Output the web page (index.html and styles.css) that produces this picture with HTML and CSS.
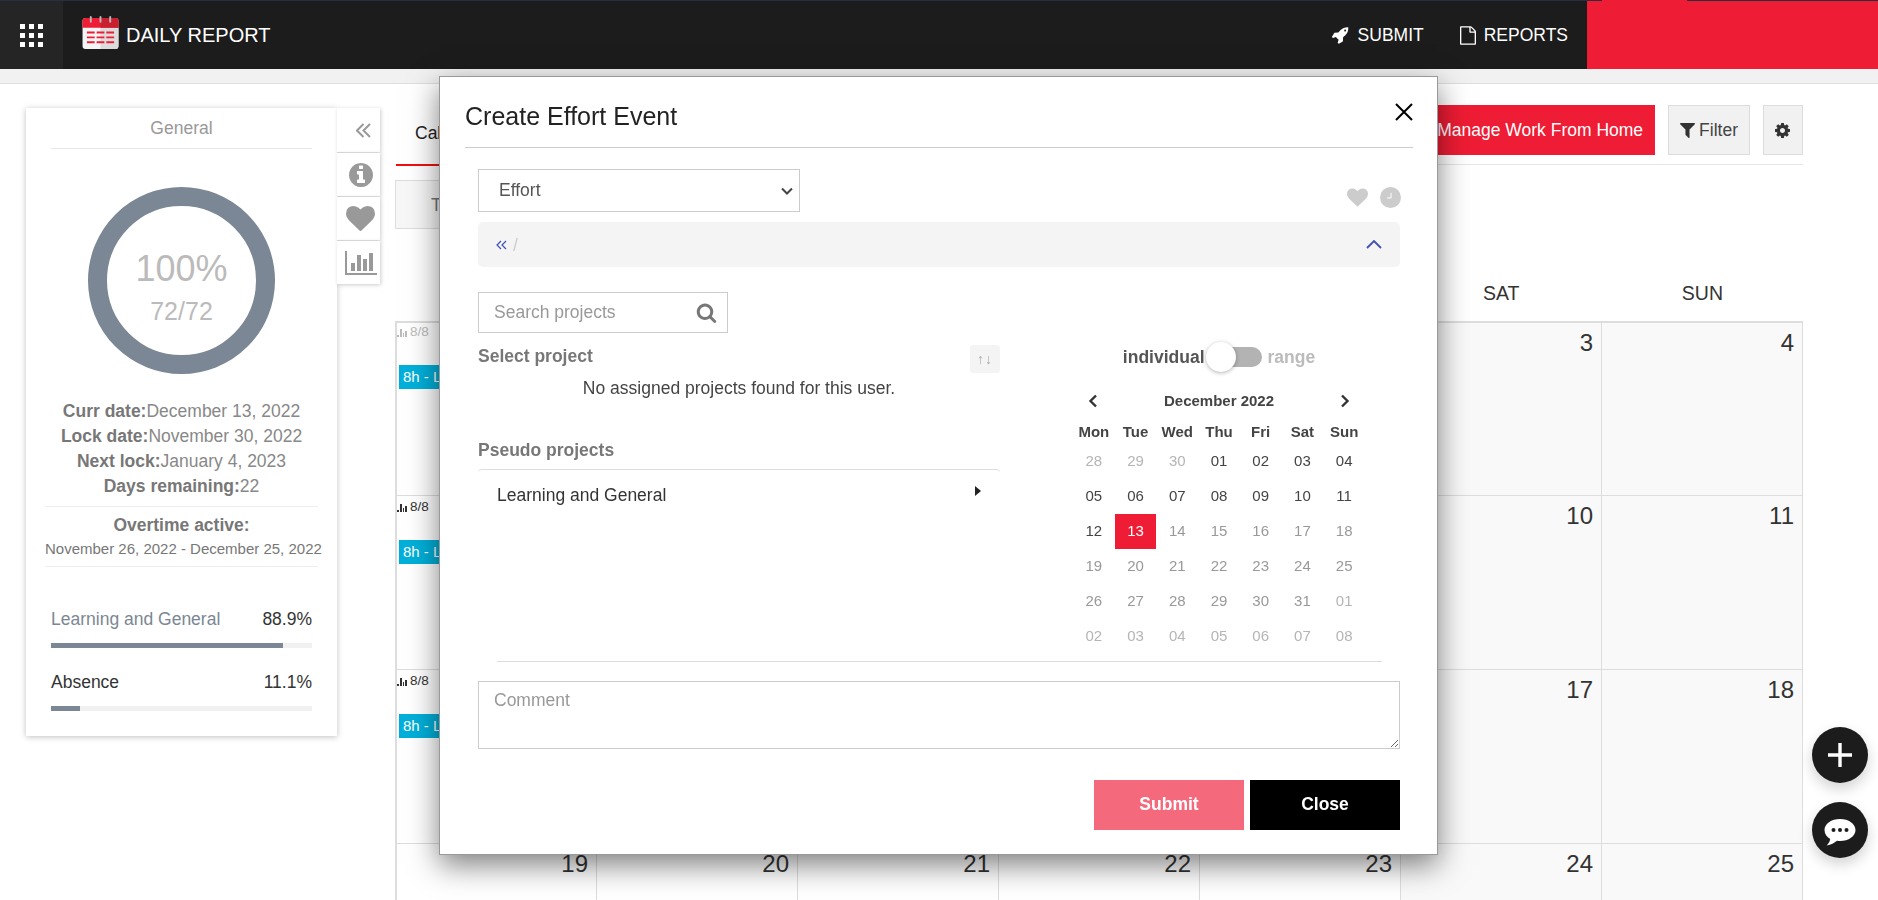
FILE: index.html
```html
<!DOCTYPE html>
<html lang="en">
	<head>
		<meta charset="UTF-8" />
		<meta name="viewport" content="width=device-width, initial-scale=1.0" />
		<title>Daily Report</title>
		<link rel="stylesheet" href="styles.css">
	</head>
	<body>
		<nav class="navbar">
			<div class="apps-button">
				<div class="apps-grid">
					<span></span><span></span><span></span>
					<span></span><span></span><span></span>
					<span></span><span></span><span></span>
				</div>
			</div>
			<div class="brand">
				<svg class="brand-icon" viewBox="0 0 38 34">
					<rect x="0.5" y="2" width="37" height="32" rx="3" fill="#f5f5f5" />
					<path d="M19 12h18.5v19a3 3 0 0 1-3 3H19z" fill="#dcdcdc" />
					<path d="M3.5 2h31a3 3 0 0 1 3 3v7H.5V5a3 3 0 0 1 3-3z" fill="#ee1c34" />
					<path d="M19 2h15.5a3 3 0 0 1 3 3v7H19z" fill="#c9202f" />
					<rect x="8" y="0" width="2" height="7" rx="1" fill="#b9b9b9" />
					<rect x="18" y="0" width="2" height="7" rx="1" fill="#b9b9b9" />
					<rect x="28" y="0" width="2" height="7" rx="1" fill="#b9b9b9" />
					<path d="M5 16h8v2H5zM15 16h8v2h-8zM25 16h8v2h-8zM5 21h8v2H5zM15 21h8v2h-8zM25 21h8v2h-8zM5 26h8v2H5zM15 26h8v2h-8zM25 26h8v2h-8z" fill="#ee1c34" />
				</svg>
				<span>DAILY REPORT</span>
			</div>
			<div class="nav-links">
				<a class="nav-link">
					<svg class="nav-icon nav-rocket" viewBox="0 0 1792 1792"><path d="M1504 448q0-40-28-68t-68-28-68 28-28 68 28 68 68 28 68-28 28-68zm224-288q0 249-75.5 430.5t-253.5 360.5q-81 80-195 176l-20 379q-2 16-16 26l-384 224q-7 4-16 4-12 0-23-9l-64-64q-13-14-8-32l85-276-281-281-276 85q-3 1-9 1-14 0-23-9l-64-64q-17-19-5-39l224-384q10-14 26-16l379-20q96-114 176-195 188-187 358-258t431-71q14 0 24 9.5t10 22.5z" /></svg>
					SUBMIT
				</a>
				<a class="nav-link">
					<svg class="nav-icon nav-file" viewBox="128 0 1536 1792"><path d="M1596 380q28 28 48 76t20 88v1152q0 40-28 68t-68 28h-1344q-40 0-68-28t-28-68v-1600q0-40 28-68t68-28h896q40 0 88 20t76 48zm-444-244v376h376q-10-29-22-41l-313-313q-12-12-41-22zm384 1528v-1024h-416q-40 0-68-28t-28-68v-416h-768v1536h1280z" /></svg>
					REPORTS
				</a>
			</div>
			<div class="nav-user"><div class="nav-user-tab"></div></div>
		</nav>
		<div class="subbar"></div>

		<main class="main">
			<aside class="sidebar">
				<div class="summary-card">
					<div class="summary-title">General</div>
					<div class="ring">
						<div class="ring-percent">100%</div>
						<div class="ring-hours">72/72</div>
					</div>
					<div class="dates">
						<div><b>Curr date:</b>December 13, 2022</div>
						<div><b>Lock date:</b>November 30, 2022</div>
						<div><b>Next lock:</b>January 4, 2023</div>
						<div><b>Days remaining:</b>22</div>
					</div>
					<div class="overtime">
						<div class="overtime-title">Overtime active:</div>
						<div class="overtime-range">November 26, 2022 - December 25, 2022</div>
					</div>
					<div class="share-row first">
						<span class="share-name muted">Learning and General</span>
						<span>88.9%</span>
					</div>
					<div class="share-bar"><div class="share-fill" style="width: 88.9%"></div></div>
					<div class="share-row">
						<span class="share-name">Absence</span>
						<span>11.1%</span>
					</div>
					<div class="share-bar"><div class="share-fill" style="width: 11.1%"></div></div>
				</div>
				<div class="side-tabs">
					<div class="side-tab">
						<svg class="tab-chevrons" viewBox="0 0 15 15"><path d="M7.5 1 1 7.5 7.5 14M14 1 7.5 7.5 14 14" /></svg>
					</div>
					<div class="side-tab">
						<svg class="tab-icon" viewBox="128 128 1536 1536"><path d="M1152 1376v-160q0-14-9-23t-23-9h-96v-512q0-14-9-23t-23-9h-320q-14 0-23 9t-9 23v160q0 14 9 23t23 9h96v320h-96q-14 0-23 9t-9 23v160q0 14 9 23t23 9h448q14 0 23-9t9-23zm-128-896v-160q0-14-9-23t-23-9h-192q-14 0-23 9t-9 23v160q0 14 9 23t23 9h192q14 0 23-9t9-23zm640 416q0 209-103 385.5t-279.5 279.5-385.5 103-385.5-103-279.5-279.5-103-385.5 103-385.5 279.5-279.5 385.5-103 385.5 103 279.5 279.5 103 385.5z" /></svg>
					</div>
					<div class="side-tab">
						<svg class="tab-heart" viewBox="0 128 1792 1536"><path d="M896 1664q-26 0-44-18l-624-602q-10-8-27.5-26t-55.5-65.5-68-97.5-53.5-121-23.5-138q0-220 127-344t351-124q62 0 126.5 21.5t120 58 95.5 68.5 76 68q36-36 76-68t95.5-68.5 120-58 126.5-21.5q224 0 351 124t127 344q0 221-229 450l-623 600q-18 18-44 18z" /></svg>
					</div>
					<div class="side-tab">
						<svg class="tab-chart" viewBox="0 128 2048 1536"><path d="M640 896v512h-256v-512h256zm384-512v1024h-256v-1024h256zm1024 1152v128h-2048v-1536h128v1408h1920zm-640-896v768h-256v-768h256zm384-384v1152h-256v-1152h256z" /></svg>
					</div>
				</div>
			</aside>

			<section class="calendar">
				<div class="toolbar">
					<div class="tab-active">Calendar</div>
					<div class="toolbar-actions">
						<button class="btn-red">Manage Work From Home</button>
						<button class="btn-plain">
							<svg class="btn-filter" viewBox="192 256 1408 1408"><path d="M1595 295q17 41-14 70l-493 493v742q0 42-39 59-13 5-25 5-27 0-45-19l-256-256q-19-19-19-45v-486l-493-493q-31-29-14-70 17-39 59-39h1280q42 0 59 39z" /></svg>
							Filter
						</button>
						<button class="btn-plain btn-gear">
							<svg class="btn-cog" viewBox="128 128 1536 1536"><path d="M1152 896q0-106-75-181t-181-75-181 75-75 181 75 181 181 75 181-75 75-181zm512-109v222q0 12-8 23t-20 13l-185 28q-19 54-39 91 35 50 107 138 10 12 10 25t-9 23q-27 37-99 108t-94 71q-12 0-26-9l-138-108q-44 23-91 38-16 136-29 186-7 28-36 28h-222q-14 0-24.5-8.5t-11.5-21.5l-28-184q-49-16-90-37l-141 107q-10 9-25 9-14 0-25-11-126-114-165-168-7-10-7-23 0-12 8-23 15-21 51-66.5t54-70.5q-27-50-41-99l-183-27q-13-2-21-12.5t-8-23.5v-222q0-12 8-23t19-13l186-28q14-46 39-92-40-57-107-138-10-12-10-24 0-10 9-23 26-36 98.5-107.5t94.5-71.5q13 0 26 10l138 107q44-23 91-38 16-136 29-186 7-28 36-28h222q14 0 24.5 8.5t11.5 21.5l28 184q49 16 90 37l142-107q9-9 24-9 13 0 25 10 129 119 165 170 7 8 7 22 0 12-8 23-15 21-51 66.5t-54 70.5q26 50 41 98l183 28q13 2 21 12.5t8 23.5z" /></svg>
						</button>
					</div>
				</div>
				<div class="today-box">Today</div>

				<div class="week-head">
					<div>MON</div><div>TUE</div><div>WED</div><div>THU</div><div>FRI</div><div>SAT</div><div>SUN</div>
				</div>
				<div class="month">
					<div class="day first-row">
						<div class="day-top past">
							<svg class="mini-chart" viewBox="0 0 10 9"><path d="M0 7h2v2H0zM3 1h2v8H3zM6 5h1v4H6zM8 3h2v6H8z" /></svg>
							8/8
						</div>
						<div class="event">8h - Learning and General</div>
					</div>
					<div class="day first-row"><div class="day-num">29</div></div>
					<div class="day first-row"><div class="day-num">30</div></div>
					<div class="day first-row"><div class="day-num">1</div></div>
					<div class="day first-row"><div class="day-num">2</div></div>
					<div class="day first-row weekend"><div class="day-num">3</div></div>
					<div class="day first-row weekend"><div class="day-num">4</div></div>

					<div class="day">
						<div class="day-top">
							<svg class="mini-chart" viewBox="0 0 10 9"><path d="M0 7h2v2H0zM3 1h2v8H3zM6 5h1v4H6zM8 3h2v6H8z" /></svg>
							8/8
						</div>
						<div class="event">8h - Learning and General</div>
					</div>
					<div class="day"><div class="day-num">6</div></div>
					<div class="day"><div class="day-num">7</div></div>
					<div class="day"><div class="day-num">8</div></div>
					<div class="day"><div class="day-num">9</div></div>
					<div class="day weekend"><div class="day-num">10</div></div>
					<div class="day weekend"><div class="day-num">11</div></div>

					<div class="day">
						<div class="day-top">
							<svg class="mini-chart" viewBox="0 0 10 9"><path d="M0 7h2v2H0zM3 1h2v8H3zM6 5h1v4H6zM8 3h2v6H8z" /></svg>
							8/8
						</div>
						<div class="event">8h - Learning and General</div>
					</div>
					<div class="day"><div class="day-num">13</div></div>
					<div class="day"><div class="day-num">14</div></div>
					<div class="day"><div class="day-num">15</div></div>
					<div class="day"><div class="day-num">16</div></div>
					<div class="day weekend"><div class="day-num">17</div></div>
					<div class="day weekend"><div class="day-num">18</div></div>

					<div class="day"><div class="day-num">19</div></div>
					<div class="day"><div class="day-num">20</div></div>
					<div class="day"><div class="day-num">21</div></div>
					<div class="day"><div class="day-num">22</div></div>
					<div class="day"><div class="day-num">23</div></div>
					<div class="day weekend"><div class="day-num">24</div></div>
					<div class="day weekend"><div class="day-num">25</div></div>
				</div>
			</section>
		</main>

		<div class="fab fab-add">
			<svg viewBox="0 0 24 24"><path d="M10.3 0h3.4v10.3H24v3.4H13.7V24h-3.4V13.7H0v-3.4h10.3z" /></svg>
		</div>
		<div class="fab fab-chat">
			<svg viewBox="0 0 32 28"><path d="M16 1c8.6 0 15.5 4.9 15.5 11S24.6 23 16 23c-1 0-2-.1-3-.2C10.4 25 7 27 2.7 27.5c1.8-1.7 3.2-3.800 3.5-6.4C2.800 19.100.5 15.800.5 12 .5 5.900 7.400 1 16 1z" /><circle cx="9.5" cy="12" r="2" class="chat-dot" /><circle cx="16" cy="12" r="2" class="chat-dot" /><circle cx="22.5" cy="12" r="2" class="chat-dot" /></svg>
		</div>

		<div class="modal">
			<div class="modal-header">
				<h2>Create Effort Event</h2>
				<svg class="modal-close" viewBox="0 0 18 18"><path d="M1 1l16 16M17 1 1 17" /></svg>
			</div>
			<div class="modal-body">
				<div class="type-row">
					<select class="type-select">
						<option>Effort</option>
					</select>
					<div class="type-icons">
						<svg class="type-heart" viewBox="0 128 1792 1536"><path d="M896 1664q-26 0-44-18l-624-602q-10-8-27.5-26t-55.5-65.5-68-97.5-53.5-121-23.5-138q0-220 127-344t351-124q62 0 126.5 21.5t120 58 95.5 68.5 76 68q36-36 76-68t95.5-68.5 120-58 126.5-21.5q224 0 351 124t127 344q0 221-229 450l-623 600q-18 18-44 18z" /></svg>
						<svg class="type-clock" viewBox="0 0 21 21"><circle cx="10.5" cy="10.5" r="10.5" /><path d="M11 6v5H7" /></svg>
					</div>
				</div>
				<div class="crumbs">
					<div class="crumb-path">
						<svg class="crumb-back" viewBox="0 0 11 10"><path d="M5 1 1 5l4 4M10 1 6 5l4 4" /></svg>
						<span class="crumb-sep">/</span>
					</div>
					<svg class="crumb-toggle" viewBox="0 0 16 9"><path d="M1 8l7-7 7 7" /></svg>
				</div>
				<div class="search-box">
					<input class="search-input" type="text" placeholder="Search projects">
					<svg class="search-icon" viewBox="0 0 1792 1792"><path d="M1216 832q0-185-131.5-316.5t-316.5-131.5-316.5 131.5-131.5 316.5 131.5 316.5 316.5 131.5 316.5-131.5 131.5-316.5zm512 832q0 52-38 90t-90 38q-54 0-90-38l-343-342q-179 124-399 124-143 0-273.5-55.5t-225-150-150-225-55.5-273.5 55.5-273.5 150-225 225-150 273.5-55.5 273.5 55.5 225 150 150 225 55.5 273.5q0 220-124 399l343 343q37 37 37 90z" /></svg>
				</div>
				<div class="picker-cols">
					<div class="projects-col">
						<div class="projects-head">
							<span class="section-label">Select project</span>
							<span class="sort-button">↑↓</span>
						</div>
						<div class="no-projects">No assigned projects found for this user.</div>
						<div class="section-label pseudo-label">Pseudo projects</div>
						<div class="pseudo-item">
							<span>Learning and General</span>
							<span class="item-arrow"></span>
						</div>
					</div>
					<div class="dates-col">
						<div class="mode-toggle">
							<span class="mode-on">individual</span>
							<span class="switch"><span class="switch-knob"></span></span>
							<span class="mode-off">range</span>
						</div>
						<div class="datepicker">
							<div class="dp-nav">
								<svg class="dp-arrow" viewBox="0 0 10 14"><path d="M8 1.5 2.5 7 8 12.5" /></svg>
								<span>December 2022</span>
								<svg class="dp-arrow" viewBox="0 0 10 14"><path d="M2 1.5 7.5 7 2 12.5" /></svg>
							</div>
							<div class="dp-week">
								<span>Mon</span><span>Tue</span><span>Wed</span><span>Thu</span><span>Fri</span><span>Sat</span><span>Sun</span>
							</div>
							<div class="dp-days">
								<span class="off">28</span><span class="off">29</span><span class="off">30</span><span>01</span><span>02</span><span>03</span><span>04</span>
								<span>05</span><span>06</span><span>07</span><span>08</span><span>09</span><span>10</span><span>11</span>
								<span>12</span><span class="selected">13</span><span class="later">14</span><span class="later">15</span><span class="later">16</span><span class="later">17</span><span class="later">18</span>
								<span class="later">19</span><span class="later">20</span><span class="later">21</span><span class="later">22</span><span class="later">23</span><span class="later">24</span><span class="later">25</span>
								<span class="later">26</span><span class="later">27</span><span class="later">28</span><span class="later">29</span><span class="later">30</span><span class="later">31</span><span class="off">01</span>
								<span class="off">02</span><span class="off">03</span><span class="off">04</span><span class="off">05</span><span class="off">06</span><span class="off">07</span><span class="off">08</span>
							</div>
						</div>
					</div>
				</div>
				<div class="modal-divider"></div>
				<textarea class="comment" placeholder="Comment"></textarea>
				<div class="modal-actions">
					<button class="btn-submit">Submit</button>
					<button class="btn-close">Close</button>
				</div>
			</div>
		</div>
	</body>
</html>
```

FILE: styles.css
```css
* {
	margin: 0;
	padding: 0;
	box-sizing: border-box;
}

html,
body {
	height: 900px;
	overflow: hidden;
}

body {
	font-family: "Liberation Sans", Arial, sans-serif;
	font-size: 17.5px;
	line-height: 24px;
	background: white;
	color: #333;
}

/* top bar */
.navbar {
	display: flex;
	align-items: center;
	height: 69px;
	background: #1c1c1c;
	border-top: 1px solid #2a2d3d;
	color: white;
}

.apps-button {
	display: flex;
	align-items: center;
	justify-content: center;
	width: 63px;
	height: 68px;
	background: #252525;
}

.apps-grid {
	display: grid;
	grid-template-columns: repeat(3, 5px);
	gap: 4px;
}

.apps-grid span {
	width: 5px;
	height: 5px;
	background: white;
}

.brand {
	display: flex;
	align-items: center;
	gap: 7px;
	margin-left: 19px;
	font-size: 20px;
}

.brand-icon {
	width: 37px;
	height: 33px;
	margin-top: -5px;
}

.nav-links {
	display: flex;
	gap: 36px;
	margin-left: auto;
	margin-right: 19px;
}

.nav-link {
	display: flex;
	align-items: center;
	gap: 8px;
}

.nav-icon {
	width: 18px;
	height: 18px;
	fill: white;
}

.nav-rocket {
	margin-right: 1px;
}

.nav-file {
	width: 16px;
	height: 19px;
}

.nav-user {
	position: relative;
	width: 291px;
	height: 68px;
	background: #ee1c34;
}

.nav-user-tab {
	position: absolute;
	top: -1px;
	left: 15px;
	width: 85px;
	height: 1px;
	background: #ee1c34;
}

.subbar {
	height: 15px;
	background: #f1f1f1;
	border-bottom: 1px solid #dedede;
}

/* page */
.main {
	display: flex;
	gap: 15px;
	padding: 21px 75px 0 26px;
}

.sidebar {
	display: flex;
	align-items: flex-start;
	flex: none;
	margin-top: 3px;
}

.summary-card {
	width: 311px;
	padding: 0 25px 25px;
	background: white;
	box-shadow: 0 1px 6px rgba(0, 0, 0, 0.25);
}

.summary-title {
	height: 41px;
	line-height: 40px;
	text-align: center;
	color: #999;
	border-bottom: 1px solid #e8e8e8;
}

.ring {
	display: flex;
	flex-direction: column;
	align-items: center;
	width: 187px;
	height: 187px;
	margin: 38px auto 0;
	padding-top: 42px;
	border: 19px solid #7b8794;
	border-radius: 50%;
	color: #bbb;
}

.ring-percent {
	font-size: 36px;
	line-height: 42px;
}

.ring-hours {
	margin-top: 6px;
	font-size: 25px;
	line-height: 30px;
}

.dates {
	margin-top: 25px;
	text-align: center;
	line-height: 25px;
	color: #888;
}

.dates b {
	color: #777;
}

.overtime {
	margin: 7px -6px 0;
	padding: 6px 0 6px;
	border-top: 1px solid #eee;
	border-bottom: 1px solid #eee;
	text-align: center;
	color: #777;
}

.overtime-title {
	font-weight: bold;
	line-height: 25px;
}

.overtime-range {
	padding-right: 3px;
	font-size: 15px;
	line-height: 22px;
	white-space: nowrap;
}

.share-row {
	display: flex;
	justify-content: space-between;
	margin-top: 22px;
}

.share-row.first {
	margin-top: 40px;
}

.share-name.muted {
	color: #7b8794;
}

.share-bar {
	height: 5px;
	margin-top: 12px;
	background: #f1f1f1;
}

.share-fill {
	height: 100%;
	background: #7b8794;
}

.side-tabs {
	display: flex;
	flex-direction: column;
	gap: 1px;
}

.side-tab {
	display: flex;
	align-items: center;
	justify-content: center;
	width: 43px;
	height: 43px;
	background: white;
	box-shadow: 1px 1px 4px rgba(0, 0, 0, 0.2);
}

.side-tab:first-child {
	height: 44px;
}

.tab-chevrons {
	width: 15px;
	height: 15px;
	margin-left: 9px;
	fill: none;
	stroke: #999;
	stroke-width: 2;
}

.tab-icon {
	width: 24px;
	height: 24px;
	margin-left: 5px;
	fill: #999;
}

.tab-heart {
	width: 29px;
	height: 25px;
	margin-left: 3px;
	fill: #999;
}

.tab-chart {
	width: 32px;
	height: 24px;
	margin-left: 5px;
	fill: #999;
}

/* calendar */
.calendar {
	flex: 1;
	min-width: 0;
}

.toolbar {
	display: flex;
	justify-content: space-between;
	height: 60px;
	border-bottom: 1px solid #e6e6e6;
}

.tab-active {
	height: 61px;
	padding: 16px 20px 0 19px;
	margin-left: 1px;
	border-bottom: 2px solid #ee1111;
	color: #222;
}

.toolbar-actions {
	display: flex;
	gap: 13px;
	align-items: flex-start;
}

.toolbar-actions button {
	height: 50px;
	font: inherit;
}

.btn-red {
	padding: 0 12px;
	background: #ee1c34;
	border: none;
	color: white;
}

.btn-plain {
	display: flex;
	align-items: center;
	gap: 4px;
	padding: 0 11px;
	background: #f1f1f1;
	border: 1px solid #dcdcdc;
	color: #444;
}

.btn-gear {
	width: 40px;
	padding: 0 11px;
}

.btn-filter {
	width: 15px;
	height: 15px;
	fill: #333;
}

.btn-cog {
	width: 15px;
	height: 15px;
	fill: #333;
}

.today-box {
	width: 170px;
	height: 49px;
	margin-top: 15px;
	padding: 12px 0 0 35px;
	background: #f7f7f7;
	border: 1px solid #ddd;
	color: #777;
}

.week-head {
	display: grid;
	grid-template-columns: repeat(7, 1fr);
	align-items: center;
	height: 58px;
	margin-top: 34px;
	padding-top: 2px;
	text-align: center;
	font-size: 19.5px;
}

.month {
	display: grid;
	grid-template-columns: repeat(7, 1fr);
	grid-auto-rows: 174px;
	border-right: 1px solid #ddd;
}

.day {
	padding: 0 0 0 2px;
	border-left: 1px solid #ddd;
	border-top: 1px solid #ddd;
	min-width: 0;
	overflow: hidden;
}

.day:nth-child(7n + 1) {
	border-left-width: 2px;
}

.day.first-row {
	border-top: 2px solid #ddd;
}

.day.weekend {
	background: #f9f9f9;
}

.day-num {
	padding: 2px 8px 0 0;
	line-height: 36px;
	text-align: right;
	font-size: 24px;
}

.day-top {
	display: flex;
	align-items: center;
	gap: 3px;
	margin-left: -2px;
	padding-top: 3px;
	font-size: 13.5px;
	line-height: 16px;
}

.first-row .day-top {
	padding-top: 1px;
}

.day-top.past {
	color: #bbb;
}

.mini-chart {
	width: 10px;
	height: 9px;
	fill: currentColor;
	shape-rendering: crispEdges;
}

.event {
	height: 24px;
	margin-top: 25px;
	padding-left: 4px;
	background: #00b0da;
	color: white;
	font-size: 15px;
	white-space: nowrap;
	overflow: hidden;
}

/* floating buttons */
.fab {
	position: fixed;
	left: 1812px;
	display: flex;
	align-items: center;
	justify-content: center;
	width: 56px;
	height: 56px;
	background: #1c1c1c;
	border-radius: 50%;
	box-shadow: 0 6px 14px rgba(0, 0, 0, 0.18);
}

.fab-add {
	top: 727px;
}

.fab-add svg {
	width: 24px;
	height: 24px;
	fill: white;
}

.fab-chat {
	top: 802px;
}

.fab-chat svg {
	width: 32px;
	height: 28px;
	margin-top: 3px;
	fill: white;
}

.chat-dot {
	fill: #1c1c1c;
}

/* modal */
.modal {
	position: fixed;
	top: 76px;
	left: 439px;
	width: 999px;
	height: 779px;
	background: white;
	border: 1px solid #999;
	box-shadow: 0 10px 28px rgba(0, 0, 0, 0.5);
}

.modal-header {
	display: flex;
	justify-content: space-between;
	align-items: center;
	height: 71px;
	margin: 0 24px 0 25px;
	padding-top: 7px;
	border-bottom: 1px solid #ccc;
}

.modal-header h2 {
	font-size: 25px;
	font-weight: normal;
	color: #222;
}

.modal-close {
	width: 18px;
	height: 18px;
	margin-top: -8px;
	fill: none;
	stroke: #000;
	stroke-width: 2;
}

.modal-body {
	padding: 21px 37px 0 38px;
}

.type-row {
	display: flex;
	justify-content: space-between;
}

.type-select {
	appearance: none;
	width: 322px;
	height: 43px;
	padding: 0 0 2px 20px;
	background: white url("data:image/svg+xml,%3Csvg xmlns='http://www.w3.org/2000/svg' width='12' height='8' viewBox='0 0 12 8'%3E%3Cpath d='M1 1.5 6 6.5 11 1.5' fill='none' stroke='%23444' stroke-width='2'/%3E%3C/svg%3E") no-repeat right 6px center;
	border: 1px solid #ccc;
	border-radius: 0;
	font: inherit;
	color: #555;
}

.type-icons {
	display: flex;
	align-items: center;
	gap: 12px;
	margin: 18px -1px 0 0;
	height: 20px;
}

.type-heart {
	width: 21px;
	height: 19px;
	fill: #ccc;
}

.type-clock {
	width: 21px;
	height: 21px;
	fill: #ccc;
}

.type-clock path {
	fill: none;
	stroke: white;
	stroke-width: 1;
}

.crumbs {
	display: flex;
	justify-content: space-between;
	align-items: center;
	height: 45px;
	margin-top: 10px;
	padding: 0 18px;
	background: #f4f4f4;
	border-radius: 5px;
}

.crumb-path {
	display: flex;
	align-items: center;
	gap: 6px;
}

.crumb-back {
	width: 11px;
	height: 10px;
	fill: none;
	stroke: #3f51b5;
	stroke-width: 1.2;
}

.crumb-sep {
	color: #ccc;
}

.crumb-toggle {
	width: 16px;
	height: 9px;
	fill: none;
	stroke: #3f51b5;
	stroke-width: 1.8;
}

.search-box {
	display: flex;
	align-items: center;
	width: 250px;
	height: 41px;
	margin-top: 25px;
	padding: 0 10px 0 15px;
	border: 1px solid #ccc;
}

.search-input {
	flex: 1;
	min-width: 0;
	padding-bottom: 2px;
	border: none;
	outline: none;
	font: inherit;
}

.search-input::placeholder,
.comment::placeholder {
	color: #999;
	opacity: 1;
}

.search-icon {
	flex: none;
	width: 21px;
	height: 21px;
	fill: #777;
}

.picker-cols {
	display: flex;
	gap: 38px;
}

.projects-col {
	width: 522px;
	padding-top: 11px;
}

.projects-head {
	display: flex;
	justify-content: space-between;
	align-items: flex-start;
}

.section-label {
	font-weight: bold;
	color: #777;
}

.sort-button {
	width: 30px;
	height: 28px;
	margin-top: 1px;
	margin-bottom: -1px;
	background: #f4f4f4;
	border-radius: 3px;
	text-align: center;
	font-size: 14px;
	letter-spacing: 1px;
	line-height: 28px;
	color: #aaa;
}

.no-projects {
	margin-top: 4px;
	text-align: center;
	color: #444;
}

.pseudo-label {
	margin-top: 38px;
}

.pseudo-item {
	display: flex;
	justify-content: space-between;
	margin-top: 7px;
	padding: 13px 19px;
	border-top: 1px solid #ddd;
	border-radius: 4px;
}

.item-arrow {
	width: 0;
	height: 0;
	margin-top: 3px;
	border-left: 6px solid #222;
	border-top: 5px solid transparent;
	border-bottom: 5px solid transparent;
}

.dates-col {
	flex: 1;
	padding-top: 9px;
}

.mode-toggle {
	display: flex;
	justify-content: center;
	align-items: center;
	height: 30px;
	font-weight: bold;
}

.mode-on {
	color: #555;
}

.mode-off {
	color: #bbb;
}

.switch {
	position: relative;
	width: 55px;
	height: 20px;
	margin: 0 6px 0 2px;
	background: #b3b3b3;
	border-radius: 10px;
}

.switch-knob {
	position: absolute;
	top: -5px;
	left: -1px;
	width: 30px;
	height: 30px;
	background: white;
	border-radius: 50%;
	box-shadow: 0 1px 4px rgba(0, 0, 0, 0.3);
}

.datepicker {
	width: 292px;
	margin: 14px auto 0;
}

.dp-nav {
	display: flex;
	justify-content: space-between;
	align-items: center;
	height: 30px;
	padding: 0 15px;
	font-size: 15px;
	font-weight: bold;
	color: #444;
}

.dp-arrow {
	width: 10px;
	height: 14px;
	fill: none;
	stroke: #333;
	stroke-width: 2.4;
}

.dp-week,
.dp-days {
	display: grid;
	grid-template-columns: repeat(7, 1fr);
	text-align: center;
	font-size: 15px;
}

.dp-week {
	height: 28px;
	padding-top: 4px;
	font-weight: bold;
	line-height: 23px;
	color: #444;
}

.dp-days {
	grid-auto-rows: 35px;
	line-height: 33px;
	color: #444;
}

.dp-days .off {
	color: #b5b5b5;
}

.dp-days .later {
	color: #999;
}

.dp-days .selected {
	background: #ee1c34;
	color: white;
}

.modal-divider {
	height: 1px;
	margin: 7px 18px 0 19px;
	background: #ddd;
}

.comment {
	display: block;
	width: 100%;
	height: 68px;
	margin-top: 19px;
	padding: 6px 15px;
	border: 1px solid #ccc;
	outline: none;
	font: inherit;
}

.modal-actions {
	display: flex;
	justify-content: flex-end;
	gap: 6px;
	margin-top: 31px;
}

.modal-actions button {
	width: 150px;
	height: 50px;
	padding-bottom: 2px;
	border: none;
	color: white;
	font: inherit;
	font-weight: bold;
}

.btn-submit {
	background: #f4697b;
}

.btn-close {
	background: black;
}
```
